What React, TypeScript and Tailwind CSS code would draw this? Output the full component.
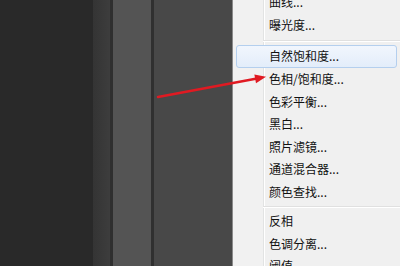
import React from "react";

type Item = { label: string; kind: "item" | "sep"; h?: string; hl?: boolean };

const items: Item[] = [
  { label: "曲线...", kind: "item" },
  { label: "曝光度...", kind: "item" },
  { label: "", kind: "sep", h: "h-[9px]" },
  { label: "自然饱和度...", kind: "item", hl: true },
  { label: "色相/饱和度...", kind: "item" },
  { label: "色彩平衡...", kind: "item" },
  { label: "黑白...", kind: "item" },
  { label: "照片滤镜...", kind: "item" },
  { label: "通道混合器...", kind: "item" },
  { label: "颜色查找...", kind: "item" },
  { label: "", kind: "sep", h: "h-[6.5px]" },
  { label: "反相", kind: "item" },
  { label: "色调分离...", kind: "item" },
  { label: "阈值", kind: "item" },
];

export default function App() {
  return (
    <div
      className="relative w-[400px] h-[266px] overflow-hidden flex"
      style={{ fontFamily: '"Noto Sans CJK SC", "Noto Sans", sans-serif' }}
    >
      <div className="w-[93px] h-full bg-[#292929]" />
      <div className="w-[17px] h-full bg-gradient-to-r from-[#343434] to-[#3d3d3d]" />
      <div className="w-[3px] h-full bg-[#2f2f2f]" />
      <div className="w-[38px] h-full bg-[#545454]" />
      <div className="w-[3px] h-full bg-[#303030]" />
      <div className="w-[78px] h-full bg-[#484848]" />
      <div className="w-[1px] h-full bg-[#8a8a8a]" />
      <div className="flex-1 h-full bg-[#f0f0f0] relative flex">
        <div className="w-[30px] h-full bg-[#f1f1f1]" />
        <div className="w-[1px] h-full bg-[#e2e3e3]" />
        <div className="w-[1px] h-full bg-[#ffffff]" />
        <div className="flex-1" />
        <div className="absolute inset-0 flex flex-col -mt-[9px]">
          {items.map((it, i) =>
            it.kind === "sep" ? (
              <div key={i} className={`${it.h} shrink-0 flex flex-col justify-center pl-[30px]`}>
                <div className="h-[1px] bg-[#e0e0e0]" />
                <div className="h-[1px] bg-[#ffffff]" />
              </div>
            ) : (
              <div key={i} className="h-[22.6px] shrink-0 relative flex items-center">
                {it.hl && (
                  <div className="absolute left-[3px] right-[3px] top-0 bottom-0 rounded-[3px] border border-[#b4cfee] bg-gradient-to-b from-[#f1f6fd] to-[#e3edfa]" />
                )}
                <span className="relative pl-[36px] text-[12px] leading-none text-[#111111]">
                  {it.label}
                </span>
              </div>
            )
          )}
        </div>
      </div>
      <svg
        className="absolute left-0 top-0 pointer-events-none"
        width="400"
        height="266"
        viewBox="0 0 400 266"
      >
        <line x1="158" y1="97" x2="257" y2="78.5" stroke="#e01a22" strokeWidth="2.4" strokeLinecap="round" />
        <polygon points="266,76.8 256.03,83.26 254.36,74.42" fill="#e01a22" />
      </svg>
    </div>
  );
}
